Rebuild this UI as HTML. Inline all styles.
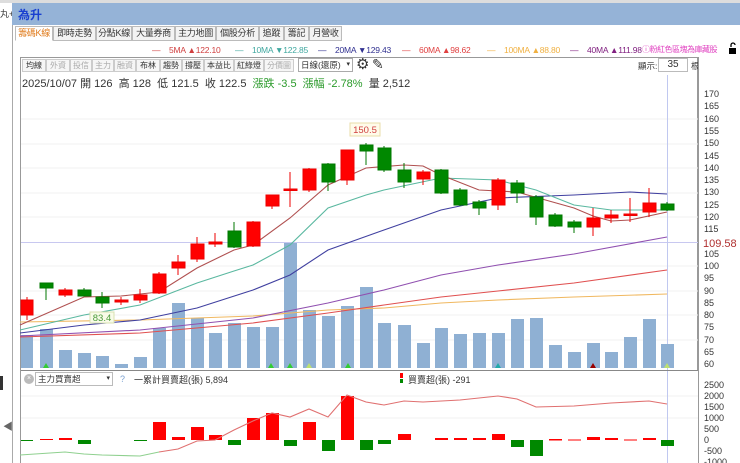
<!DOCTYPE html>
<html><head><meta charset="utf-8">
<style>
*{margin:0;padding:0;box-sizing:border-box}
body{width:740px;height:463px;overflow:hidden;background:#fff;font-family:"Liberation Sans","Noto Sans CJK TC",sans-serif;position:relative;font-size:10px;color:#333}
.a{position:absolute;white-space:nowrap}
.tab{position:absolute;top:26px;height:15px;border:1px solid #bbb;background:#f3f3f3;font-size:9px;line-height:13px;text-align:center;color:#333;white-space:nowrap;overflow:hidden;letter-spacing:-0.3px}
.btn{position:absolute;top:59px;height:13px;border:1px solid #ccc;background:#f6f6f6;font-size:8px;line-height:11px;text-align:center;color:#333;white-space:nowrap;overflow:hidden}
.ma{position:absolute;top:45px;font-size:8.5px;white-space:nowrap;letter-spacing:-0.2px}
</style></head><body>
<div class="a" style="left:0;top:0;width:740px;height:3px;background:#ddd"></div>
<div class="a" style="left:12px;top:3px;width:728px;height:22px;background:#95b3d7"></div>
<div class="a" style="left:0;top:3px;width:12px;height:22px;background:#fff;font-size:9px;line-height:22px;overflow:hidden">丸+</div>
<div class="a" style="left:18px;top:6px;font-size:12px;font-weight:bold;color:#1a3fd0">為升</div>
<div class="a" style="left:12px;top:25px;width:1px;height:438px;background:#aaa"></div>
<div class="a" style="left:0;top:376px;width:3px;height:14px;background:#333"></div>
<div class="a" style="left:3px;top:418px;font-size:10px;color:#666">◀</div>

<div class="tab" style="left:15px;width:38px;background:#fff;color:#e07a1a;border-bottom-color:#fff">籌碼K線</div>
<div class="tab" style="left:53px;width:43px">即時走勢</div>
<div class="tab" style="left:96px;width:36px">分點K線</div>
<div class="tab" style="left:132px;width:43px">大量券商</div>
<div class="tab" style="left:175px;width:41px">主力地圖</div>
<div class="tab" style="left:216px;width:43px">個股分析</div>
<div class="tab" style="left:259px;width:25px">追蹤</div>
<div class="tab" style="left:284px;width:25px">籌記</div>
<div class="tab" style="left:309px;width:33px">月營收</div>

<div class="ma" style="left:152px;color:#d04040">—&nbsp;&nbsp;&nbsp;&nbsp;5MA ▲122.10</div>
<div class="ma" style="left:235px;color:#40a8a0">—&nbsp;&nbsp;&nbsp;&nbsp;10MA ▼122.85</div>
<div class="ma" style="left:318px;color:#303090">—&nbsp;&nbsp;&nbsp;&nbsp;20MA ▼129.43</div>
<div class="ma" style="left:402px;color:#e04040">—&nbsp;&nbsp;&nbsp;&nbsp;60MA ▲98.62</div>
<div class="ma" style="left:487px;color:#f0b040">—&nbsp;&nbsp;&nbsp;&nbsp;100MA ▲88.80</div>
<div class="ma" style="left:570px;color:#802080">—&nbsp;&nbsp;&nbsp;&nbsp;40MA ▲111.98</div>
<div class="ma" style="top:44px;left:642px;font-size:8px;color:#e040c0;letter-spacing:-0.5px">ⓘ粉紅色區塊為庫藏股</div>
<div class="a" style="top:42px;left:729px;width:8px;height:12px;overflow:hidden"><svg width="8" height="12"><path d="M2 5V3a2 2 0 0 1 4 0" fill="none" stroke="#000" stroke-width="1.3"/><rect x="0" y="6" width="7" height="6" fill="#000"/></svg></div>

<div class="a" style="left:20px;top:57px;width:678px;height:313px;border:1px solid #999;border-bottom:none"></div>
<div class="btn" style="left:22px;width:24px">均線</div>
<div class="btn" style="left:46px;width:24px;color:#aaa">外資</div>
<div class="btn" style="left:70px;width:22px;color:#aaa">投信</div>
<div class="btn" style="left:92px;width:22px;color:#aaa">主力</div>
<div class="btn" style="left:114px;width:22px;color:#aaa">融資</div>
<div class="btn" style="left:136px;width:24px">布林</div>
<div class="btn" style="left:160px;width:22px">趨勢</div>
<div class="btn" style="left:182px;width:22px">撐壓</div>
<div class="btn" style="left:204px;width:30px">本益比</div>
<div class="btn" style="left:234px;width:30px">紅綠燈</div>
<div class="btn" style="left:264px;width:30px;color:#aaa">分價圖</div>
<div class="a" style="left:298px;top:58px;width:55px;height:14px;border:1px solid #aaa;font-size:8.5px;line-height:12px;padding-left:2px;overflow:hidden">日線(還原)<span style="position:absolute;right:2px;font-size:7px">▾</span></div>
<div class="a" style="left:356px;top:55px;font-size:15px;color:#333">⚙</div>
<div class="a" style="left:372px;top:56px;font-size:14px;color:#333">✎</div>
<div class="a" style="left:638px;top:60px;font-size:8.5px">顯示:</div>
<div class="a" style="left:658px;top:58px;width:30px;height:14px;border:1px solid #bbb;font-size:10px;line-height:12px;text-align:center">35</div>
<div class="a" style="left:691px;top:60px;font-size:8.5px">根</div>
<div class="a" style="left:22px;top:75px;font-size:11px;color:#333">2025/10/07 開 126&nbsp; 高 128&nbsp; 低 121.5&nbsp; 收 122.5&nbsp; <span style="color:#2a9a2a">漲跌 -3.5&nbsp; 漲幅 -2.78%</span>&nbsp; 量 2,512</div>

<svg class="a" style="left:0;top:0" width="740" height="463" viewBox="0 0 740 463">
<g stroke="#f0f0f0" stroke-width="1">
<line x1="21" y1="119" x2="698" y2="119"/><line x1="21" y1="144" x2="698" y2="144"/><line x1="21" y1="168" x2="698" y2="168"/><line x1="21" y1="193" x2="698" y2="193"/><line x1="21" y1="217" x2="698" y2="217"/><line x1="21" y1="266" x2="698" y2="266"/><line x1="21" y1="291" x2="698" y2="291"/><line x1="21" y1="315" x2="698" y2="315"/><line x1="21" y1="340" x2="698" y2="340"/>
<line x1="21" y1="418" x2="698" y2="418"/><line x1="21" y1="396" x2="698" y2="396"/>
</g>
<line x1="21" y1="242.5" x2="698" y2="242.5" stroke="#c8c8f0"/>
<line x1="667.5" y1="75" x2="667.5" y2="463" stroke="#c0c8f0"/>
<g fill="#8fb0d3">
<rect x="21" y="335" width="12" height="33"/><rect x="40" y="329" width="13" height="39"/><rect x="59" y="350" width="13" height="18"/><rect x="78" y="353" width="13" height="15"/><rect x="96" y="356" width="13" height="12"/><rect x="115" y="364" width="13" height="4"/><rect x="134" y="357" width="13" height="11"/><rect x="153" y="328" width="13" height="40"/><rect x="172" y="303" width="13" height="65"/><rect x="191" y="318" width="13" height="50"/><rect x="209" y="333" width="13" height="35"/><rect x="228" y="323" width="13" height="45"/><rect x="247" y="327" width="13" height="41"/><rect x="266" y="327" width="13" height="41"/><rect x="284" y="243" width="13" height="125"/><rect x="303" y="310" width="13" height="58"/><rect x="322" y="316" width="13" height="52"/><rect x="341" y="306" width="13" height="62"/><rect x="360" y="287" width="13" height="81"/><rect x="378" y="323" width="13" height="45"/><rect x="398" y="325" width="13" height="43"/><rect x="417" y="343" width="13" height="25"/><rect x="435" y="328" width="13" height="40"/><rect x="454" y="334" width="13" height="34"/><rect x="473" y="333" width="13" height="35"/><rect x="492" y="333" width="13" height="35"/><rect x="511" y="319" width="13" height="49"/><rect x="530" y="318" width="13" height="50"/><rect x="549" y="345" width="13" height="23"/><rect x="568" y="352" width="13" height="16"/><rect x="587" y="343" width="13" height="25"/><rect x="605" y="352" width="13" height="16"/><rect x="624" y="337" width="13" height="31"/><rect x="643" y="319" width="13" height="49"/><rect x="661" y="344" width="13" height="24"/>
</g>
<g fill="#3c3" ><path d="M43 368l3-5 3 5z M268 368l3-5 3 5z M287 368l3-5 3 5z M345 368l3-5 3 5z"/></g>
<path d="M306 368l3-5 3 5z M664 368l3-5 3 5z" fill="#bde070"/>
<path d="M495 368l3-5 3 5z" fill="#2aa"/><path d="M590 368l3-5 3 5z" fill="#900"/>
<g fill="none" stroke-width="1.1">
<polyline stroke="#f0b860" points="20,322 140,320 253,316 328,310 384,308 441,303 498,300 574,297 667,294"/>
<polyline stroke="#e05050" points="20,337 140,333 253,323 328,313 384,305 441,297 498,291 574,283 667,270"/>
<polyline stroke="#9050b0" points="20,336 140,330 253,318 328,303 384,290 441,275 498,265 574,254 667,237"/>
<polyline stroke="#4040a0" points="20,333 84,325 140,320 197,308 253,290 290,275 328,250 384,230 441,210 498,198 574,195 630,192 667,194"/>
<polyline stroke="#5ab8a0" points="20,330 84,315 140,305 197,283 234,271 253,265 290,245 328,208 366,195 384,190 441,178 498,180 536,190 574,205 611,210 649,210 667,210"/>
<polyline stroke="#b05050" points="20,325 84,297 121,296 159,292 197,268 234,250 253,245 290,218 328,185 366,168 404,165 423,166 441,175 479,190 517,192 574,208 593,216 611,221 630,220 667,212"/>
</g>
<g stroke-width="1">
<g stroke="#e00" fill="#f00">
<line x1="27" y1="297" x2="27" y2="320"/><rect x="21" y="300" width="12" height="15"/>
<line x1="65" y1="288" x2="65" y2="297"/><rect x="59" y="290" width="13" height="5"/>
<line x1="121" y1="297" x2="121" y2="305"/><rect x="115" y="300" width="13" height="2"/>
<line x1="140" y1="289" x2="140" y2="303"/><rect x="134" y="295" width="13" height="5"/>
<line x1="159" y1="272" x2="159" y2="294"/><rect x="153" y="274" width="13" height="19"/>
<line x1="178" y1="255" x2="178" y2="275"/><rect x="172" y="262" width="13" height="6"/>
<line x1="197" y1="237" x2="197" y2="262"/><rect x="191" y="244" width="13" height="15"/>
<line x1="215" y1="233" x2="215" y2="247"/><rect x="209" y="242" width="13" height="2"/>
<line x1="253" y1="221" x2="253" y2="247"/><rect x="247" y="222" width="13" height="24"/>
<line x1="272" y1="195" x2="272" y2="209"/><rect x="266" y="195" width="13" height="11"/>
<line x1="290" y1="172" x2="290" y2="207"/><rect x="284" y="189" width="13" height="1.5"/>
<line x1="309" y1="168" x2="309" y2="192"/><rect x="303" y="169" width="13" height="21"/>
<line x1="347" y1="150" x2="347" y2="185"/><rect x="341" y="150" width="13" height="30"/>
<line x1="423" y1="170" x2="423" y2="185"/><rect x="417" y="172" width="13" height="7"/>
<line x1="498" y1="178" x2="498" y2="210"/><rect x="492" y="180" width="13" height="25"/>
<line x1="593" y1="208" x2="593" y2="236"/><rect x="587" y="218" width="13" height="9"/>
<line x1="611" y1="210" x2="611" y2="223"/><rect x="605" y="215" width="13" height="3"/>
<line x1="630" y1="198" x2="630" y2="222"/><rect x="624" y="214" width="13" height="1.5"/>
<line x1="649" y1="188" x2="649" y2="217"/><rect x="643" y="203" width="13" height="9"/>
</g>
<g stroke="#070" fill="#080">
<line x1="46" y1="283" x2="46" y2="300"/><rect x="40" y="283" width="13" height="5"/>
<line x1="84" y1="288" x2="84" y2="296"/><rect x="78" y="290" width="13" height="6"/>
<line x1="102" y1="292" x2="102" y2="308"/><rect x="96" y="297" width="13" height="6"/>
<line x1="234" y1="222" x2="234" y2="248"/><rect x="228" y="231" width="13" height="16"/>
<line x1="328" y1="163" x2="328" y2="191"/><rect x="322" y="164" width="13" height="18"/>
<line x1="366" y1="143" x2="366" y2="165"/><rect x="360" y="145" width="13" height="6"/>
<line x1="384" y1="146" x2="384" y2="172"/><rect x="378" y="148" width="13" height="22"/>
<line x1="404" y1="163" x2="404" y2="188"/><rect x="398" y="170" width="13" height="12"/>
<line x1="441" y1="169" x2="441" y2="194"/><rect x="435" y="170" width="13" height="23"/>
<line x1="460" y1="188" x2="460" y2="206"/><rect x="454" y="190" width="13" height="15"/>
<line x1="479" y1="200" x2="479" y2="215"/><rect x="473" y="202" width="13" height="6"/>
<line x1="517" y1="180" x2="517" y2="203"/><rect x="511" y="183" width="13" height="10"/>
<line x1="536" y1="195" x2="536" y2="225"/><rect x="530" y="197" width="13" height="20"/>
<line x1="555" y1="213" x2="555" y2="227"/><rect x="549" y="215" width="13" height="11"/>
<line x1="574" y1="220" x2="574" y2="233"/><rect x="568" y="222" width="13" height="5"/>
<line x1="667" y1="202" x2="667" y2="211"/><rect x="661" y="204" width="13" height="6"/>
</g>
</g>
<rect x="350" y="123" width="30" height="13" fill="#fffbea" stroke="#e8dcaa"/>
<text x="365" y="133" font-size="9.5" fill="#d04040" text-anchor="middle" font-family="Liberation Sans">150.5</text>
<rect x="90" y="312" width="24" height="11" fill="#f8fbe8" stroke="#d8e0b0"/>
<text x="102" y="321" font-size="9.5" fill="#4a9a3a" text-anchor="middle" font-family="Liberation Sans">83.4</text>
<line x1="698.5" y1="57" x2="698.5" y2="463" stroke="#999"/>
<g font-size="9" fill="#333" font-family="Liberation Sans">
<text x="704" y="97">170</text><text x="704" y="109">165</text><text x="704" y="122">160</text><text x="704" y="134">155</text><text x="704" y="146">150</text><text x="704" y="159">145</text><text x="704" y="171">140</text><text x="704" y="183">135</text><text x="704" y="195">130</text><text x="704" y="208">125</text><text x="704" y="220">120</text><text x="704" y="232">115</text><text x="704" y="257">105</text><text x="704" y="269">100</text><text x="704" y="281">95</text><text x="704" y="294">90</text><text x="704" y="306">85</text><text x="704" y="318">80</text><text x="704" y="330">75</text><text x="704" y="343">70</text><text x="704" y="355">65</text><text x="704" y="367">60</text>
<text x="704" y="388">2500</text><text x="704" y="399">2000</text><text x="704" y="410">1500</text><text x="704" y="421">1000</text><text x="704" y="432">500</text><text x="704" y="443">0</text><text x="704" y="454">-500</text><text x="704" y="465">-1000</text>
</g>
<text x="703" y="247" font-size="11" fill="#b03030" font-family="Liberation Sans">109.58</text>
<line x1="20" y1="370.5" x2="698" y2="370.5" stroke="#888"/>
<line x1="20.5" y1="370" x2="20.5" y2="463" stroke="#999"/>
<g fill="#f00">
<rect x="40" y="439" width="13" height="1"/><rect x="59" y="438" width="13" height="2"/><rect x="153" y="422" width="13" height="18"/><rect x="172" y="437" width="13" height="3"/><rect x="191" y="427" width="13" height="13"/><rect x="209" y="435" width="13" height="5"/><rect x="247" y="418" width="13" height="22"/><rect x="266" y="413" width="13" height="27"/><rect x="303" y="422" width="13" height="18"/><rect x="341" y="396" width="13" height="44"/><rect x="398" y="434" width="13" height="6"/><rect x="435" y="438" width="13" height="2"/><rect x="454" y="438" width="13" height="2"/><rect x="473" y="438" width="13" height="2"/><rect x="492" y="434" width="13" height="6"/><rect x="549" y="439" width="13" height="1.5"/><rect x="568" y="439.5" width="13" height="1"/><rect x="587" y="437" width="13" height="3"/><rect x="605" y="438" width="13" height="2"/><rect x="624" y="439.5" width="13" height="1"/><rect x="643" y="438" width="13" height="2"/>
</g>
<g fill="#080">
<rect x="21" y="440" width="12" height="1"/><rect x="78" y="440" width="13" height="4"/><rect x="134" y="440" width="13" height="1"/><rect x="228" y="440" width="13" height="5"/><rect x="284" y="440" width="13" height="6"/><rect x="322" y="440" width="13" height="11"/><rect x="360" y="440" width="13" height="10"/><rect x="378" y="440" width="13" height="4"/><rect x="511" y="440" width="13" height="7"/><rect x="530" y="440" width="13" height="16"/><rect x="661" y="440" width="13" height="6"/>
</g>
<polyline fill="none" stroke="#8fd08f" stroke-width="1.1" points="20,455 65,452 84,454 102,455 140,456 159,452"/>
<polyline fill="none" stroke="#e07070" stroke-width="1.1" points="159,452 178,449 197,441 215,440 234,430 253,421 272,413 290,417 309,409 328,417 347,395 366,402 384,405 404,401 423,402 460,400 479,398 498,396 517,399 536,407 574,406 611,403 649,401 667,404"/>
</svg>
<div class="a" style="left:24px;top:374px;width:10px;height:10px;border-radius:5px;background:#bbb;color:#fff;font-size:7px;line-height:10px;text-align:center">×</div>
<div class="a" style="left:35px;top:372px;width:78px;height:14px;border:1px solid #bbb;font-size:8.5px;line-height:12px;padding-left:2px">主力買賣超<span style="position:absolute;right:2px;font-size:7px">▾</span></div>
<div class="a" style="left:120px;top:374px;font-size:9px;color:#7aa0d0">?</div>
<div class="a" style="left:134px;top:373px;font-size:9px;color:#333">一累計買賣超(張) 5,894</div>
<div class="a" style="left:400px;top:373px;width:3px;height:5px;background:#f00"></div>
<div class="a" style="left:400px;top:379px;width:3px;height:4px;background:#080"></div>
<div class="a" style="left:408px;top:373px;font-size:9px;color:#333">買賣超(張) -291</div>
</body></html>
